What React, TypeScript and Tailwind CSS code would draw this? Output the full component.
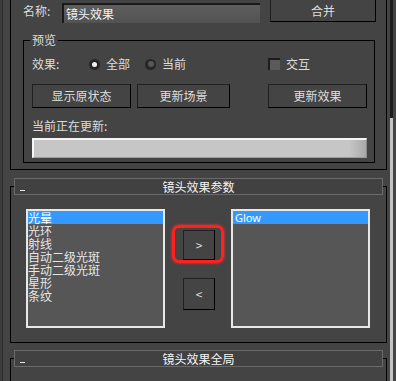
import React from 'react';

const cjk = "font-['Noto_Sans_CJK_SC','Noto_Sans',sans-serif]";

interface BtnProps {
  className?: string;
  children?: React.ReactNode;
}

const MaxButton: React.FC<BtnProps> = ({ className = '', children }) => (
  <div
    className={`flex items-center justify-center border border-[#202020] border-r-black border-b-black bg-[#444444] text-[12px] leading-none text-[#dedede] ${className}`}
  >
    {children}
  </div>
);

const Radio: React.FC<{ checked?: boolean }> = ({ checked }) => (
  <div className="flex h-[11px] w-[11px] items-center justify-center rounded-full bg-[#262626]">
    <div className={`rounded-full ${checked ? 'h-[5px] w-[5px] bg-[#f2f2f2]' : 'h-[6px] w-[6px] bg-[#575757]'}`} />
  </div>
);

const RolloutHeader: React.FC<{ title: string }> = ({ title }) => (
  <div className="relative z-10 mx-[4px] grid h-[17px] grid-cols-[20px_1fr_20px] items-center border border-[#6a6a6a] bg-[#414141]">
    <div className="ml-[5px] mt-[7px] h-[1px] w-[5px] bg-[#e6e6e6]" />
    <div className="text-center text-[12px] leading-none text-[#f4f4f4]">{title}</div>
    <div />
  </div>
);

const ListBox: React.FC<{ items: string[]; latin?: boolean }> = ({ items, latin }) => (
  <div className="h-[119px] w-[139px] border-2 border-[#e8e8e8] bg-[#565656]">
    {items.map((item, i) => (
      <div
        key={item}
        className={`h-[13px] whitespace-nowrap leading-[13px] ${
          latin ? "pl-[2px] font-['Noto_Sans',sans-serif] text-[11px]" : 'text-[12px]'
        } ${i === 0 ? 'bg-[#3399ff] text-white' : 'text-[#e6e6e6]'}`}
      >
        {item}
      </div>
    ))}
  </div>
);

const leftItems = ['光晕', '光环', '射线', '自动二级光斑', '手动二级光斑', '星形', '条纹'];

export default function App() {
  return (
    <div className={`flex h-[381px] w-[396px] overflow-hidden bg-[#444444] text-[#dcdcdc] ${cjk}`}>
      <div className="w-[2px] bg-[#3c3c3c]" />
      <div className="w-[1px] bg-[#2a2a2a]" />

      {/* main rollouts */}
      <div className="w-[387px]">
        {/* rollout 1 */}
        <div className="ml-[7px] h-[170px] w-[377px] border-x border-b border-black pl-[12px]">
          <div className="flex h-[22px] items-start">
            <div className="mt-[5px] w-[39px] text-[12px] leading-[12px]">名称:</div>
            <div className="mt-[3px] flex h-[20px] w-[198px] items-center border-l-2 border-t-2 border-[#1a1a1a] border-b-[#666] border-r-[#666] bg-[linear-gradient(to_bottom,#5e5e5e,#525252)] pl-[2px] text-[12px] leading-none text-[#f4f4f4]">
              镜头效果
            </div>
            <MaxButton className="-mt-[1px] ml-[10px] h-[23px] w-[106px]">合并</MaxButton>
          </div>

          {/* 预览 group */}
          <div className="relative mt-[18px] h-[123px] w-[352px] border border-black pl-[8px]">
            <span className="absolute -top-[7px] left-[6px] bg-[#444444] px-[2px] text-[12px] leading-[12px]">预览</span>

            <div className="mt-[16px] flex h-[14px] items-center text-[12px] leading-none">
              <div className="w-[57px]">效果:</div>
              <Radio checked />
              <div className="ml-[6px] w-[24px]">全部</div>
              <div className="ml-[15px]">
                <Radio />
              </div>
              <div className="ml-[6px] w-[24px]">当前</div>
              <div className="ml-[82px] h-[12px] w-[12px] border-l-2 border-t-2 border-[#1c1c1c] bg-[#5a5a5a]" />
              <div className="ml-[6px]">交互</div>
            </div>

            <div className="mt-[13px] flex h-[24px]">
              <MaxButton className="w-[99px]">显示原状态</MaxButton>
              <MaxButton className="ml-[6px] w-[93px]">更新场景</MaxButton>
              <MaxButton className="ml-[38px] w-[99px]">更新效果</MaxButton>
            </div>

            <div className="mt-[11px] text-[12px] leading-[13px]">当前正在更新:</div>
            <div className="mt-[6px] h-[20px] w-[335px] border-l-2 border-t-2 border-[#f6f6f6] border-b border-r border-b-[#9c9c9c] border-r-[#8a8a8a] bg-[linear-gradient(to_right,#c6c6c6_95%,#a8a8a8)]" />
          </div>
        </div>

        {/* rollout 2 */}
        <div className="ml-[7px] mt-[8px] w-[377px]">
          <RolloutHeader title="镜头效果参数" />
          <div className="-mt-[9px] h-[157px] border border-black pl-[15px] pt-[22px]">
            <div className="flex">
              <ListBox items={leftItems} />
              <div className="relative w-[66px]">
                <MaxButton className="ml-[18px] mt-[21px] h-[30px] w-[32px] text-[11px] text-[#d0d0d0]">&gt;</MaxButton>
                <MaxButton className="ml-[18px] mt-[18px] h-[32px] w-[32px] text-[11px] text-[#d0d0d0]">&lt;</MaxButton>
                <div className="absolute left-[7px] top-[16px] h-[38px] w-[52px] rounded-[7px] border-[3px] border-[#ff2020] shadow-[0_0_3px_#ff3030]" />
              </div>
              <ListBox items={['Glow']} latin />
            </div>
          </div>
        </div>

        {/* rollout 3 */}
        <div className="ml-[7px] mt-[7px] w-[377px]">
          <RolloutHeader title="镜头效果全局" />
          <div className="-mt-[9px] h-[40px] border border-black" />
        </div>
      </div>

      {/* scrollbar */}
      <div className="flex w-[3px] flex-col">
        <div className="h-[118px] bg-[#1e1e1e]" />
        <div className="flex-1 bg-[#c4c4c4]" />
      </div>
      <div className="flex-1 bg-[#444444]" />
    </div>
  );
}
